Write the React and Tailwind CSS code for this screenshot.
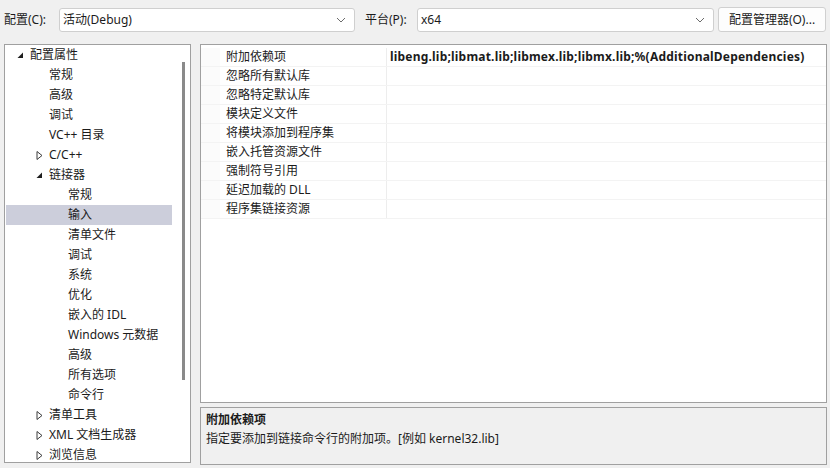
const font = { fontFamily: '"Noto Sans", "Noto Sans CJK SC", sans-serif' };

const treeRows = [
  { label: "配置属性", level: 0, arrow: "open" },
  { label: "常规", level: 1 },
  { label: "高级", level: 1 },
  { label: "调试", level: 1 },
  { label: "VC++ 目录", level: 1 },
  { label: "C/C++", level: 1, arrow: "closed" },
  { label: "链接器", level: 1, arrow: "open" },
  { label: "常规", level: 2 },
  { label: "输入", level: 2, selected: true },
  { label: "清单文件", level: 2 },
  { label: "调试", level: 2 },
  { label: "系统", level: 2 },
  { label: "优化", level: 2 },
  { label: "嵌入的 IDL", level: 2 },
  { label: "Windows 元数据", level: 2 },
  { label: "高级", level: 2 },
  { label: "所有选项", level: 2 },
  { label: "命令行", level: 2 },
  { label: "清单工具", level: 1, arrow: "closed" },
  { label: "XML 文档生成器", level: 1, arrow: "closed" },
  { label: "浏览信息", level: 1, arrow: "closed" },
];

const props = [
  { name: "附加依赖项", value: "libeng.lib;libmat.lib;libmex.lib;libmx.lib;%(AdditionalDependencies)" },
  { name: "忽略所有默认库" },
  { name: "忽略特定默认库" },
  { name: "模块定义文件" },
  { name: "将模块添加到程序集" },
  { name: "嵌入托管资源文件" },
  { name: "强制符号引用" },
  { name: "延迟加载的 DLL" },
  { name: "程序集链接资源" },
];

const Chevron = () => (
  <svg width="10" height="6" viewBox="0 0 10 6" className="shrink-0">
    <path d="M1 1 L5 5 L9 1" fill="none" stroke="#6b6b6b" strokeWidth="1" />
  </svg>
);

const Arrow = ({ type }) =>
  type === "open" ? (
    <svg width="7" height="7" viewBox="0 0 7 7">
      <path d="M6 0.5 L6 6 L0.5 6 Z" fill="#1e1e1e" />
    </svg>
  ) : (
    <svg width="7" height="9" viewBox="0 0 7 9">
      <path d="M1 0.5 L6 4.5 L1 8.5 Z" fill="none" stroke="#3c3c3c" strokeWidth="1" />
    </svg>
  );

const Dropdown = ({ text, width }) => (
  <div
    className={`${width} h-[24px] bg-white border border-[#cfcfcf] rounded-[3px] flex items-center justify-between pl-[3px] pr-[8px]`}
  >
    <span>{text}</span>
    <Chevron />
  </div>
);

const App = () => {
  const textIndent = ["pl-[24px]", "pl-[43px]", "pl-[62px]"];
  const arrowPos = ["left-[11px]", "left-[30px]", "left-[49px]"];

  return (
    <div
      className="w-[830px] h-[468px] bg-[#f0f0f0] text-[12px] text-[#1b1b1b] overflow-hidden"
      style={font}
    >
      {/* barra superior */}
      <div className="h-[38px] flex items-center pl-[4px] pt-[1px]">
        <span className="w-[55px]">配置(C):</span>
        <Dropdown text="活动(Debug)" width="w-[296px]" />
        <span className="ml-[10px] w-[52px]">平台(P):</span>
        <Dropdown text="x64" width="w-[297px]" />
        <div className="ml-[4px] w-[108px] h-[25px] bg-[#fdfdfd] border border-[#d0d0d0] rounded-[3px] flex items-center justify-center">
          配置管理器(O)...
        </div>
      </div>

      <div className="flex pl-[4px] pt-[6px]">
        {/* árbol */}
        <div className="w-[187px] h-[419px] border border-[#a0a0a0] bg-[#f7f7f7] flex">
          <div className="w-[167px] pl-[1px] bg-white">
            {treeRows.map((row, i) => (
              <div
                key={i}
                className={`relative h-[20px] leading-[20px] ${textIndent[row.level]} ${
                  row.selected ? "bg-[#cccedb]" : ""
                }`}
              >
                {row.arrow && (
                  <span className={`absolute top-0 h-[20px] flex items-center ${arrowPos[row.level]}`}>
                    <Arrow type={row.arrow} />
                  </span>
                )}
                {row.label}
              </div>
            ))}
          </div>
          <div className="flex-1 bg-white flex justify-center pt-[17px] pl-[5px]">
            <div className="w-[3px] h-[318px] bg-[#8a8a8a]" />
          </div>
        </div>

        <div className="ml-[9px] w-[627px] flex flex-col gap-[4px]">
          {/* cuadrícula de propiedades */}
          <div className="h-[359px] border border-[#a0a0a0] bg-white pt-[3px]">
            {props.map((p, i) => (
              <div key={i} className="flex h-[19px] leading-[18px] border-b border-[#f3f3f3]">
                <div className="w-[19px] bg-[#fbfbfb]" />
                <div className="w-[167px] pl-[6px] border-r border-[#ededed]">{p.name}</div>
                <div className="pl-[3px] font-bold whitespace-nowrap tracking-[0.2px]">{p.value}</div>
              </div>
            ))}
          </div>

          {/* descripción */}
          <div className="h-[58px] border border-[#a0a0a0] bg-[#f0f0f0] px-[5px] pt-[2px] leading-[19px]">
            <div className="font-bold">附加依赖项</div>
            <div>指定要添加到链接命令行的附加项。[例如 kernel32.lib]</div>
          </div>
        </div>
      </div>
    </div>
  );
};

export default App;
